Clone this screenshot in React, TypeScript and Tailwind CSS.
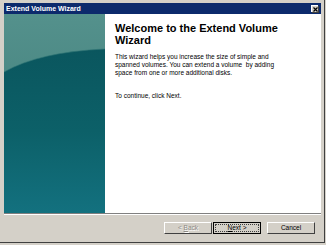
export default function App() {
  return (
    <div className="w-[326px] h-[245px] bg-[#d4d0c8] font-['Liberation_Sans',Arial,sans-serif]">
      <div className="w-[325px] h-[243px] flex flex-col border-r border-b border-[#404040] pl-[4px] pt-[3px] pr-[3px]">
        {/* title bar */}
        <div className="h-[11px] bg-[#0c2a6c] flex items-center justify-between pl-[2px] pr-[3px]">
          <span className="text-white font-bold text-[7px] leading-none">Extend Volume Wizard</span>
          <div className="w-[7px] h-[7px] bg-[#d4d0c8] border-t border-l border-white flex items-center justify-center shadow-[1px_1px_0_#404040]">
            <svg width="5" height="5" viewBox="0 0 5 5">
              <path d="M0.5 0.5 L4.5 4.5 M4.5 0.5 L0.5 4.5" stroke="#000" strokeWidth="1.2" />
            </svg>
          </div>
        </div>

        {/* content */}
        <div className="h-[199px] flex bg-white">
          <div className="w-[101px] h-full">
            <svg width="101" height="199" viewBox="0 0 101 199">
              <defs>
                <linearGradient id="top" x1="0" y1="0" x2="0" y2="1">
                  <stop offset="0" stopColor="#54918c" />
                  <stop offset="1" stopColor="#3b7a77" />
                </linearGradient>
                <linearGradient id="low" x1="0" y1="0" x2="0" y2="1">
                  <stop offset="0" stopColor="#0a565e" />
                  <stop offset="0.5" stopColor="#0c6068" />
                  <stop offset="1" stopColor="#13717f" />
                </linearGradient>
              </defs>
              <rect width="101" height="199" fill="url(#top)" />
              <path d="M0 58 Q35 38 101 35 L101 199 L0 199 Z" fill="url(#low)" />
              <path d="M0 58 Q35 38 101 35" stroke="#2f7474" strokeWidth="1" fill="none" opacity="0.6" />
            </svg>
          </div>
          <div className="flex-1 pl-[10px] pt-[8px] text-black">
            <h1 className="font-bold text-[11px] leading-[12px]">
              Welcome to the Extend Volume
              <br />
              Wizard
            </h1>
            <p className="mt-[7px] text-[6.5px] leading-[8px]">
              This wizard helps you increase the size of simple and
              <br />
              spanned volumes. You can extend a volume&nbsp; by adding
              <br />
              space from one or more additional disks.
            </p>
            <p className="mt-[15px] text-[6.5px] leading-[8px]">To continue, click Next.</p>
          </div>
        </div>

        {/* separator */}
        <div className="h-px bg-[#808080]" />
        <div className="h-px bg-white" />

        {/* buttons */}
        <div className="flex-1 flex items-start pt-[7px] pl-[160px] text-[6.5px]">
          <button className="w-[48px] h-[12px] bg-[#d4d0c8] border border-t-white border-l-white border-r-[#404040] border-b-[#404040] text-[#8d8a84] [text-shadow:1px_1px_0_#fff] leading-none">
            &lt; <span className="underline">B</span>ack
          </button>
          <button className="ml-[1px] w-[48px] h-[12px] bg-[#d4d0c8] border border-black p-[1px] leading-none">
            <div className="w-full h-full border border-dotted border-[#404040] flex items-center justify-center">
              <span>
                <span className="underline">N</span>ext &gt;
              </span>
            </div>
          </button>
          <button className="ml-[6px] w-[48px] h-[12px] bg-[#d4d0c8] border border-t-white border-l-white border-r-[#404040] border-b-[#404040] leading-none">
            Cancel
          </button>
        </div>
      </div>
    </div>
  );
}
